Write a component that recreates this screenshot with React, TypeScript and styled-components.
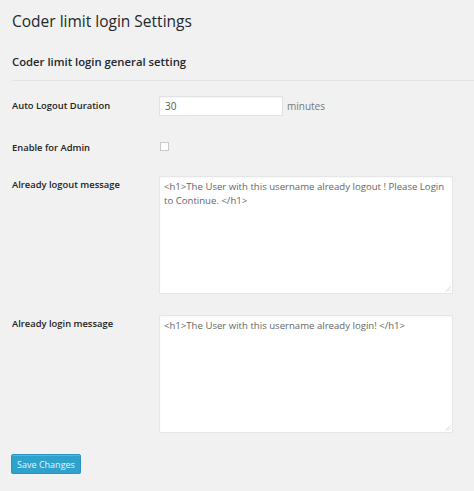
import React from "react";
import styled, { createGlobalStyle } from "styled-components";

const Global = createGlobalStyle`
  html, body { margin: 0; padding: 0; background: #f1f1f1; }
  body { font-family: "Open Sans", "Noto Sans", sans-serif; color: #444; }
`;

const Wrap = styled.div`
  padding: 0 0 0 12px;
  width: 474px;
  box-sizing: border-box;
`;

const Title = styled.h2`
  margin: 0;
  padding: 10px 0 0;
  font-size: 15.5px;
  line-height: 22px;
  font-weight: 400;
  color: #23282d;
`;

const SubTitle = styled.h3`
  margin: 0;
  padding: 22px 0 0;
  font-size: 11.3px;
  line-height: 16px;
  font-weight: 600;
  color: #23282d;
`;

const Divider = styled.div`
  margin-top: 10px;
  height: 1px;
  background: #e3e3e3;
`;

const Row = styled.div<{ $pt: number }>`
  display: grid;
  grid-template-columns: 147px 1fr;
  align-items: start;
  padding-top: ${(p) => p.$pt}px;
`;

const Label = styled.div<{ $pt: number }>`
  font-size: 9.4px;
  line-height: 14px;
  font-weight: 600;
  color: #222;
  padding-top: ${(p) => p.$pt}px;
`;

const Field = styled.div`
  display: flex;
  align-items: center;
  gap: 4px;
`;

const TextInput = styled.input`
  width: 124px;
  height: 20px;
  box-sizing: border-box;
  border: 1px solid #e2e2e2;
  box-shadow: inset 0 1px 2px rgba(0,0,0,0.05);
  background: #fff;
  font-family: inherit;
  font-size: 10px;
  color: #555;
  padding: 0 5px;
  margin: 0;
  outline: none;
`;

const Unit = styled.span`
  font-size: 10px;
  color: #777;
`;

const Check = styled.span`
  display: block;
  width: 9px;
  height: 9px;
  box-sizing: border-box;
  border: 1px solid #c8c8c8;
  background: #fff;
  margin-left: 1px;
  margin-top: 1px;
`;

const AreaBox = styled.div`
  position: relative;
  width: 294px;
`;

const Area = styled.textarea`
  width: 294px;
  height: 118px;
  box-sizing: border-box;
  border: 1px solid #e6e6e6;
  box-shadow: inset 0 1px 2px rgba(0,0,0,0.04);
  background: #fff;
  font-family: inherit;
  font-size: 9.6px;
  line-height: 14px;
  color: #666;
  padding: 3px 4px;
  margin: 0;
  resize: none;
  outline: none;
  display: block;
`;

const Grip = styled.svg`
  position: absolute;
  right: 2px;
  bottom: 2px;
  width: 6px;
  height: 6px;
`;

const Button = styled.button`
  margin-top: 21px;
  margin-left: -1px;
  width: 70px;
  height: 20px;
  background: #2ea2cc;
  border: 1px solid #2a95c5;
  border-radius: 2px;
  color: #e8f4fa;
  font-family: inherit;
  font-size: 9px;
  padding: 0;
  box-shadow: inset 0 1px 0 rgba(120,200,230,0.5), 0 1px 0 rgba(0,0,0,0.1);
  display: block;
`;

function TextBox({ value }: { value: string }) {
  return (
    <AreaBox>
      <Area defaultValue={value} />
      <Grip viewBox="0 0 6 6">
        <path d="M5.5 0.5 L0.5 5.5 M5.5 3 L3 5.5" stroke="#d8d8d8" strokeWidth="1" />
      </Grip>
    </AreaBox>
  );
}

export default function App() {
  return (
    <>
      <Global />
      <Wrap>
        <Title>Coder limit login Settings</Title>
        <SubTitle>Coder limit login general setting</SubTitle>
        <Divider />
        <Row $pt={15}>
          <Label $pt={3}>Auto Logout Duration</Label>
          <Field>
            <TextInput defaultValue="30" />
            <Unit>minutes</Unit>
          </Field>
        </Row>
        <Row $pt={25}>
          <Label $pt={0}>Enable for Admin</Label>
          <Field>
            <Check />
          </Field>
        </Row>
        <Row $pt={21}>
          <Label $pt={2}>Already logout message</Label>
          <TextBox value="<h1>The User with this username already logout ! Please Login to Continue. </h1>" />
        </Row>
        <Row $pt={21}>
          <Label $pt={2}>Already login message</Label>
          <TextBox value="<h1>The User with this username already login! </h1>" />
        </Row>
        <Button>Save Changes</Button>
      </Wrap>
    </>
  );
}
